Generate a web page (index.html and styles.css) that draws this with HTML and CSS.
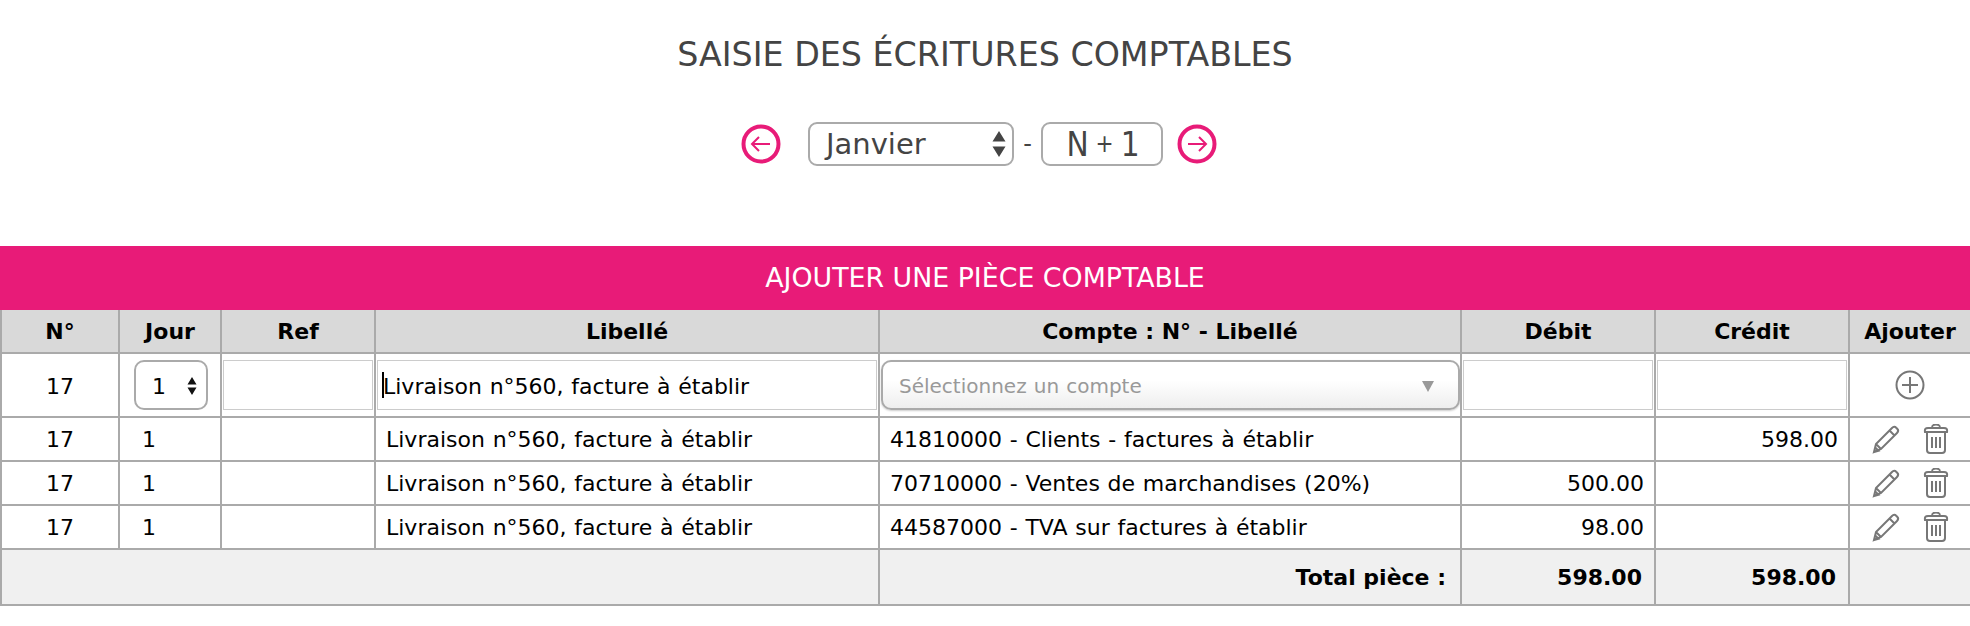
FILE: index.html
```html
<!DOCTYPE html>
<html lang="fr">
<head>
<meta charset="utf-8">
<title>Saisie des écritures comptables</title>
<link rel="stylesheet" href="styles.css">
</head>
<body>
<h1 class="title">SAISIE DES ÉCRITURES COMPTABLES</h1>
<div class="period">
  <a class="round-btn"><svg viewBox="0 0 40 40" width="40" height="40"><circle cx="20" cy="20" r="17.500" class="ring"/><path d="M29 20H11M18 13 11 20l7 7" class="arrow"/></svg></a>
  <div class="month-box"><span>Janvier</span><svg viewBox="0 0 14 26" width="14" height="26"><path d="M7 0l6.500 10.500H.5zM7 26L.5 15.500h13z" fill="#444"/></svg></div>
  <span class="dash">-</span>
  <div class="year-box"><span>N</span><small>+</small><span>1</span></div>
  <a class="round-btn"><svg viewBox="0 0 40 40" width="40" height="40"><circle cx="20" cy="20" r="17.500" class="ring"/><path d="M11 20h18M22 13l7 7-7 7" class="arrow"/></svg></a>
</div>
<h2 class="band">AJOUTER UNE PIÈCE COMPTABLE</h2>
<table class="grid">
  <colgroup>
    <col class="c-no"><col class="c-jour"><col class="c-ref"><col class="c-lib"><col class="c-compte"><col class="c-debit"><col class="c-credit"><col class="c-add">
  </colgroup>
  <thead>
    <tr><th>N°</th><th>Jour</th><th>Ref</th><th>Libellé</th><th>Compte : N° - Libellé</th><th>Débit</th><th>Crédit</th><th>Ajouter</th></tr>
  </thead>
  <tbody>
    <tr class="entry">
      <td class="center lowered">17</td>
      <td class="center"><div class="day-box"><span>1</span><svg viewBox="0 0 10 20" width="10" height="20"><path d="M5 1l4.500 7.500h-9zM5 19 .5 11.500h9z" fill="#111"/></svg></div></td>
      <td><div class="field"></div></td>
      <td><div class="field text"><i class="caret"></i>Livraison n°560, facture à établir</div></td>
      <td><div class="picker"><span>Sélectionnez un compte</span><svg viewBox="0 0 12 11" width="12" height="11"><path d="M0 0h12L6 11z" fill="#999"/></svg></div></td>
      <td><div class="field"></div></td>
      <td><div class="field"></div></td>
      <td class="center"><svg class="icon-add" viewBox="0 0 30 30" width="30" height="30"><circle cx="15" cy="15" r="13.500"/><path d="M15 7v16M7 15h16"/></svg></td>
    </tr>
    <tr>
      <td class="center">17</td><td class="day">1</td><td></td><td class="text">Livraison n°560, facture à établir</td><td class="text">41810000 - Clients - factures à établir</td><td class="num"></td><td class="num">598.00</td>
      <td class="actions"><svg viewBox="0 0 30 30" width="30" height="30"><path d="M3 28l2-8L21 4c1.500-1.500 3-1.500 4.200-.2l1 1c1.300 1.300 1.300 2.700-.2 4.200L10 25zM5 20l5 5M18.500 6.500l5 5M3 28l1.200-4.500 3.300 3.300z"/></svg><svg viewBox="0 0 26 30" width="26" height="30"><path d="M2 8c-.5-3 .5-4 3-4h16c2.500 0 3.500 1 3 4zM9 4c0-3 1-3.500 4-3.500s4 .5 4 3.500M4 8v18c0 2 1 3 3 3h12c2 0 3-1 3-3V8M9 13v11M13 13v11M17 13v11"/></svg></td>
    </tr>
    <tr>
      <td class="center">17</td><td class="day">1</td><td></td><td class="text">Livraison n°560, facture à établir</td><td class="text">70710000 - Ventes de marchandises (20%)</td><td class="num">500.00</td><td class="num"></td>
      <td class="actions"><svg viewBox="0 0 30 30" width="30" height="30"><path d="M3 28l2-8L21 4c1.500-1.500 3-1.500 4.200-.2l1 1c1.300 1.300 1.300 2.700-.2 4.200L10 25zM5 20l5 5M18.500 6.500l5 5M3 28l1.200-4.500 3.300 3.300z"/></svg><svg viewBox="0 0 26 30" width="26" height="30"><path d="M2 8c-.5-3 .5-4 3-4h16c2.500 0 3.500 1 3 4zM9 4c0-3 1-3.500 4-3.500s4 .5 4 3.500M4 8v18c0 2 1 3 3 3h12c2 0 3-1 3-3V8M9 13v11M13 13v11M17 13v11"/></svg></td>
    </tr>
    <tr>
      <td class="center">17</td><td class="day">1</td><td></td><td class="text">Livraison n°560, facture à établir</td><td class="text">44587000 - TVA sur factures à établir</td><td class="num">98.00</td><td class="num"></td>
      <td class="actions"><svg viewBox="0 0 30 30" width="30" height="30"><path d="M3 28l2-8L21 4c1.500-1.500 3-1.500 4.200-.2l1 1c1.300 1.300 1.300 2.700-.2 4.200L10 25zM5 20l5 5M18.500 6.500l5 5M3 28l1.200-4.500 3.300 3.300z"/></svg><svg viewBox="0 0 26 30" width="26" height="30"><path d="M2 8c-.5-3 .5-4 3-4h16c2.500 0 3.500 1 3 4zM9 4c0-3 1-3.500 4-3.500s4 .5 4 3.500M4 8v18c0 2 1 3 3 3h12c2 0 3-1 3-3V8M9 13v11M13 13v11M17 13v11"/></svg></td>
    </tr>
  </tbody>
  <tfoot>
    <tr><td colspan="4"></td><td class="total-label">Total pièce :</td><td class="num total">598.00</td><td class="num total">598.00</td><td></td></tr>
  </tfoot>
</table>
</body>
</html>
```
FILE: styles.css
```css
html, body { margin: 0; padding: 0; background: #fff; overflow: hidden; }
body { width: 1970px; height: 626px; font-family: "DejaVu Sans", Verdana, sans-serif; color: #000; }

.title {
  margin: 0;
  padding-top: 37px;
  height: 45px;
  font: 400 33.300px/36px "DejaVu Sans", sans-serif;
  color: #444;
  text-align: center;
}
.period {
  display: flex;
  align-items: center;
  height: 44px;
  margin-top: 40px;
  padding-left: 741px;
  color: #444;
}
.round-btn { display: block; width: 40px; height: 40px; }
.ring { fill: none; stroke: #e81b78; stroke-width: 4; }
.arrow { fill: none; stroke: #e81b78; stroke-width: 2; }
.month-box, .year-box {
  box-sizing: border-box;
  height: 44px;
  border: 2px solid #aaa;
  border-radius: 9px;
  display: flex;
  align-items: center;
}
.month-box {
  width: 206px;
  margin-left: 27px;
  padding: 0 6px 0 16px;
  justify-content: space-between;
  font-size: 29px;
}
.dash { width: 27px; text-align: center; font-size: 24px; }
.year-box { width: 122px; justify-content: center; gap: 7px; font-family: "DejaVu Sans Condensed", "DejaVu Sans", sans-serif; font-size: 33px; padding-left: 2px; }
.year-box small { font-size: 24px; }
.period .round-btn:last-child { margin-left: 14px; }

.band {
  margin: 80px 0 0;
  height: 64px;
  background: #e81b78;
  color: #fff;
  font: 400 26.800px/64px "DejaVu Sans", sans-serif;
  text-align: center;
}

.grid { border-collapse: separate; border-spacing: 0; table-layout: fixed; width: 1970px; font-size: 22px; word-spacing: .75px; border-left: 2px solid #aaa; }
.c-no { width: 118px; } .c-jour { width: 102px; } .c-ref { width: 154px; } .c-lib { width: 504px; }
.c-compte { width: 582px; } .c-debit { width: 194px; } .c-credit { width: 194px; } .c-add { width: 120px; }
.grid th, .grid td { padding: 0; border-right: 2px solid #aaa; border-bottom: 2px solid #aaa; overflow: hidden; white-space: nowrap; }
.grid th:last-child, .grid td:last-child { border-right: 0; }
.grid thead th { height: 42px; background: #d9d9d9; font-weight: 700; text-align: center; word-spacing: 0; }
.grid .entry td { height: 62px; }
.grid tbody tr:not(.entry) td { height: 42px; }
.grid tfoot td { height: 54px; background: #f0f0f0; }

.center { text-align: center; }
.grid .entry td.lowered { height: 60px; padding-top: 2px; }
.day { padding-left: 22px !important; }
.text { padding-left: 10px !important; }
.num { text-align: right; padding-right: 10px !important; }
.num.total { padding-right: 12px !important; }
.total, .total-label { font-weight: 700; word-spacing: 0; }
.total-label { text-align: right; padding-right: 14px !important; }

.field {
  box-sizing: border-box;
  height: 50px;
  margin: 0 1px 1px;
  border: 1px solid #ccc;
  position: relative;
  line-height: 51px;
}
.field.text { padding-left: 5px !important; }
.caret { position: absolute; left: 4px; top: 11px; width: 2px; height: 26px; background: #000; }
.day-box {
  box-sizing: border-box;
  width: 74px;
  height: 50px;
  margin: 0 auto;
  border: 2px solid #aaa;
  border-radius: 10px;
  display: flex;
  align-items: center;
  justify-content: space-between;
  padding: 2px 9px 0 16px;
  position: relative;
  left: 1px;
}
.picker {
  box-sizing: border-box;
  height: 50px;
  margin: 0 0 0 1px;
  border: 2px solid #aaa;
  border-radius: 10px;
  background: linear-gradient(#fff 40%, #eee 100%);
  box-shadow: 0 1px 2px rgba(0,0,0,.2);
  color: #999;
  font-size: 20px;
  display: flex;
  align-items: center;
  justify-content: space-between;
  padding: 2px 24px 0 16px;
}
.icon-add { display: block; margin: 0 auto; }
.icon-add circle, .icon-add path, .actions path { fill: none; stroke: #777; stroke-width: 2; }
.actions { text-align: center; }
.actions svg { vertical-align: middle; }
.actions svg + svg { margin-left: 22px; }
```
